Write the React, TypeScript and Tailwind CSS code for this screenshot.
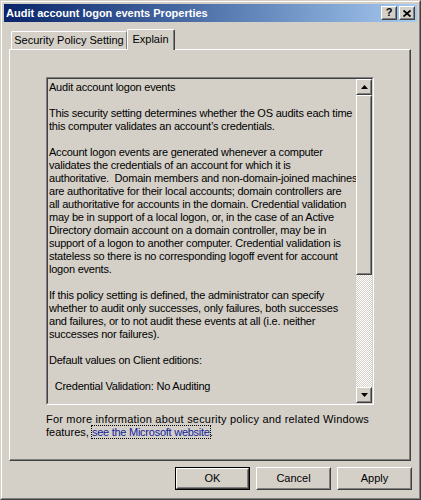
import React from "react";

const explainLines = [
  "Audit account logon events",
  "",
  "This security setting determines whether the OS audits each time",
  "this computer validates an account\u2019s credentials.",
  "",
  "Account logon events are generated whenever a computer",
  "validates the credentials of an account for which it is",
  "authoritative.  Domain members and non-domain-joined machines",
  "are authoritative for their local accounts; domain controllers are",
  "all authoritative for accounts in the domain. Credential validation",
  "may be in support of a local logon, or, in the case of an Active",
  "Directory domain account on a domain controller, may be in",
  "support of a logon to another computer. Credential validation is",
  "stateless so there is no corresponding logoff event for account",
  "logon events.",
  "",
  "If this policy setting is defined, the administrator can specify",
  "whether to audit only successes, only failures, both successes",
  "and failures, or to not audit these events at all (i.e. neither",
  "successes nor failures).",
  "",
  "Default values on Client editions:",
  "",
  "  Credential Validation: No Auditing",
];

// classic 3D raised edge: white/face on top-left, dark/shadow on bottom-right
function Raised({ className = "", children }: { className?: string; children?: React.ReactNode }) {
  return (
    <div className={`border border-t-white border-l-white border-r-[#404040] border-b-[#404040] bg-[#d4d0c8] ${className}`}>
      <div className="w-full h-full border border-t-[#d4d0c8] border-l-[#d4d0c8] border-r-[#808080] border-b-[#808080] flex items-center justify-center">
        {children}
      </div>
    </div>
  );
}

function Arrow({ down }: { down?: boolean }) {
  return (
    <svg width="7" height="4" viewBox="0 0 7 4" className="block">
      {down ? <path d="M0 0H7L3.5 4Z" fill="#000" /> : <path d="M3.5 0L7 4H0Z" fill="#000" />}
    </svg>
  );
}

function PushButton({ label, isDefault }: { label: string; isDefault?: boolean }) {
  const btn = (
    <Raised className={isDefault ? "w-[73px] h-[21px]" : "w-[75px] h-[23px]"}>
      <span className="leading-none">{label}</span>
    </Raised>
  );
  if (!isDefault) return btn;
  return <div className="border border-black">{btn}</div>;
}

export default function App() {
  return (
    <div className="w-[421px] h-[500px] bg-[#d4d0c8] text-[11px] text-black font-['Liberation_Sans',Arial,sans-serif] border border-t-[#d4d0c8] border-l-[#d4d0c8] border-r-[#404040] border-b-[#404040]">
      <div className="h-full border border-t-white border-l-white border-r-[#808080] border-b-[#808080] p-[2px] flex flex-col">
        {/* title bar */}
        <div className="h-[18px] shrink-0 bg-linear-to-r from-[#0a246a] to-[#a6caf0] flex items-center pl-[2px] pr-[2px]">
          <span className="text-white font-bold whitespace-nowrap">Audit account logon events Properties</span>
          <div className="ml-auto flex items-center">
            <Raised className="w-[16px] h-[14px]">
              <span className="font-bold text-[11px] leading-none -mt-px">?</span>
            </Raised>
            <Raised className="w-[16px] h-[14px] ml-[2px]">
              <svg width="8" height="7" viewBox="0 0 8 7" className="block">
                <path d="M0.5 0.5L7.5 6.5M7.5 0.5L0.5 6.5" stroke="#000" strokeWidth="1.8" />
              </svg>
            </Raised>
          </div>
        </div>

        {/* tabs */}
        <div className="mt-[7px] ml-[5px] flex items-end h-[20px] pl-[2px]">
          <div className="h-[18px] w-[116px] border border-b-0 border-t-white border-l-white border-r-[#808080] rounded-tl-[2px] flex items-center justify-center">
            <span className="whitespace-nowrap">Security Policy Setting</span>
          </div>
          <div className="relative z-10 -mb-px h-[21px] w-[48px] bg-[#d4d0c8] border border-b-0 border-t-white border-l-white border-r-[#404040] rounded-t-[2px]">
            <div className="h-full border-r border-r-[#808080] flex items-center justify-center pb-[2px]">
              <span>Explain</span>
            </div>
          </div>
        </div>

        {/* tab page */}
        <div className="ml-[5px] w-[402px] h-[412px] border border-t-white border-l-white border-r-[#404040] border-b-[#404040]">
          <div className="h-full border-r border-b border-r-[#808080] border-b-[#808080] pl-[36px] pt-[27px]">
            <div className="w-[328px] h-[328px] border border-t-[#808080] border-l-[#808080] border-r-white border-b-white">
              <div className="h-full border border-t-[#404040] border-l-[#404040] border-r-[#d4d0c8] border-b-[#d4d0c8] flex">
                <div className="flex-1 overflow-hidden pl-[1px] pt-[2px] tracking-[-0.22px]">
                  {explainLines.map((line, i) => (
                    <div key={i} className="h-[13px] leading-[13px] whitespace-pre">
                      {line}
                    </div>
                  ))}
                </div>
                <div className="w-[16px] flex flex-col">
                  <Raised className="w-[16px] h-[16px] shrink-0">
                    <Arrow />
                  </Raised>
                  <Raised className="w-[16px] h-[180px] shrink-0" />
                  <div className="flex-1 bg-[image:repeating-conic-gradient(#ffffff_0%_25%,#d4d0c8_0%_50%)] bg-[length:2px_2px]" />
                  <Raised className="w-[16px] h-[16px] shrink-0">
                    <Arrow down />
                  </Raised>
                </div>
              </div>
            </div>
            <div className="mt-[8px] leading-[13px]">
              <div className="whitespace-nowrap tracking-[0.2px]">For more information about security policy and related Windows</div>
              <div className="whitespace-nowrap">
                features,{" "}
                <span className="text-[#10209a] tracking-[-0.25px] outline-1 outline-dotted outline-black">see the Microsoft website</span>.
              </div>
            </div>
          </div>
        </div>

        {/* buttons */}
        <div className="mt-[6px] flex justify-end gap-[6px] pr-[5px]">
          <PushButton label="OK" isDefault />
          <PushButton label="Cancel" />
          <PushButton label="Apply" />
        </div>
      </div>
    </div>
  );
}
